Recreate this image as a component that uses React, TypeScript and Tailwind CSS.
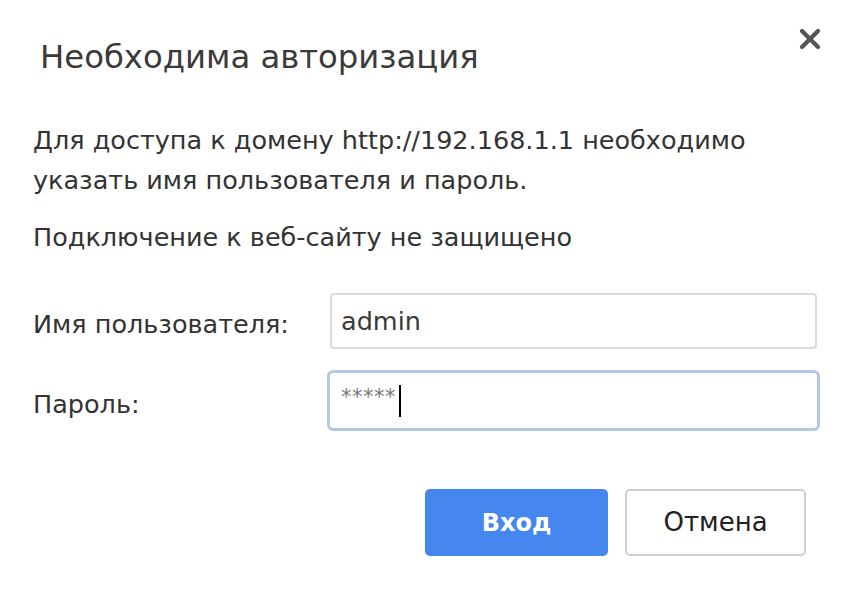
import { X } from "lucide-react";

export default function App() {
  return (
    <div className="w-[850px] h-[596px] bg-white text-[#333] font-['DejaVu_Sans',sans-serif] overflow-hidden">
      <div className="flex items-start justify-between pl-[40px] pr-[24px] pt-[37px]">
        <h1 className="text-[32.3px] leading-[40px] text-[#3a3a3a]">Необходима авторизация</h1>
        <button className="-mt-[14px] text-[#555]">
          <X size={32} strokeWidth={3.2} />
        </button>
      </div>

      <div className="pl-[33px] pr-[33px]">
        <p className="mt-[43px] text-[25.5px] leading-[40px]">
          Для доступа к домену http://192.168.1.1 необходимо
          <br />
          указать имя пользователя и пароль.
        </p>
        <p className="mt-[17px] text-[25.5px] leading-[40px]">Подключение к веб-сайту не защищено</p>

        <div className="mt-[36px] flex flex-col gap-[21px]">
          <div className="flex items-center">
            <label className="w-[297px] text-[25.5px] leading-[40px] pt-[6px]">Имя пользователя:</label>
            <div className="flex-1 h-[56px] border-2 border-[#dcdcdc] rounded-[4px] px-[9px] flex items-center text-[25.5px] text-[#3a3a3a]">
              admin
            </div>
          </div>
          <div className="flex items-center">
            <label className="w-[297px] text-[25.5px] leading-[40px] pt-[6px]">Пароль:</label>
            <div className="flex-1 -ml-[3px] -mr-[3px] h-[61px] border-[3px] border-[#b4c7e4] rounded-[6px] px-[11px] flex items-center">
              <span className="text-[21px] tracking-[0.5px] text-[#777] -mt-[6px]">*****</span>
              <span className="ml-[3px] w-[2px] h-[32px] bg-black" />
            </div>
          </div>
        </div>
      </div>

      <div className="mt-[58px] flex justify-end gap-[17px] pr-[44px]">
        <button className="w-[183px] h-[67px] rounded-[5px] bg-[#4687ef] text-white font-bold text-[24px]">
          Вход
        </button>
        <button className="w-[181px] h-[67px] rounded-[5px] border-2 border-[#cfcfcf] bg-white text-[#222] text-[26px]">
          Отмена
        </button>
      </div>
    </div>
  );
}
